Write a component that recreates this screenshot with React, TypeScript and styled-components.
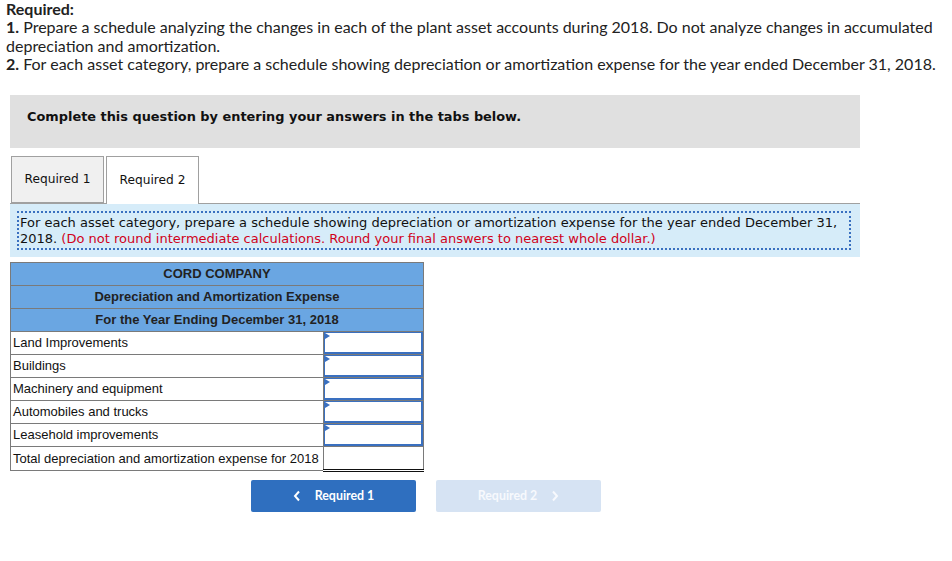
import * as React from 'react';
import styled, { createGlobalStyle } from 'styled-components';

const GlobalStyle = createGlobalStyle`
  body {
    margin: 0;
    background: #fff;
    color: #222;
  }
`;

const Page = styled.div`
  padding: 0 0 0 6px;
  box-sizing: border-box;
`;

const Requirements = styled.div`
  font-family: 'Lato', 'Liberation Sans', sans-serif;
  font-size: 16px;
  line-height: 18.4px;
  color: #222;
  p {
    margin: 0;
  }
  b {
    font-weight: 700;
  }
`;

const Panel = styled.div`
  margin: 0 0 0 4px;
  width: 850px;
`;

const Notice = styled.div`
  margin-top: 21px;
  background: #e0e0e0;
  height: 53px;
  box-sizing: border-box;
  padding: 14px 17px 0;
  font-family: 'DejaVu Sans', Verdana, sans-serif;
  font-weight: 700;
  font-size: 12.9px;
  color: #111;
`;

const TabRow = styled.div`
  display: flex;
  align-items: flex-end;
  margin-top: 8px;
  border-bottom: 1px solid #a0a0a0;
  height: 48px;
  box-sizing: border-box;
  padding-left: 1px;
`;

const Tab = styled.div<{ $active?: boolean }>`
  box-sizing: border-box;
  width: 93px;
  height: ${p => (p.$active ? '48px' : '47px')};
  margin-right: 2px;
  margin-bottom: ${p => (p.$active ? '-1px' : '0')};
  border: 1px solid #a0a0a0;
  border-bottom: ${p => (p.$active ? 'none' : '1px solid #a0a0a0')};
  background: ${p => (p.$active ? '#fff' : '#f0f0f0')};
  display: flex;
  align-items: center;
  justify-content: center;
  font-family: 'DejaVu Sans', Verdana, sans-serif;
  font-size: 12.2px;
  color: #111;
`;

const InfoBox = styled.div`
  background: #d6ecf9;
  padding: 7px 9px 7px 7px;
  height: 53px;
  box-sizing: border-box;
`;

const Dotted = styled.div`
  border: 2px dotted #3a70c0;
  padding: 2px 0 0 1px;
  font-family: 'DejaVu Sans', Verdana, sans-serif;
  font-size: 13px;
  line-height: 16px;
  color: #111;
  height: 39px;
  box-sizing: border-box;
  span {
    color: #d0021b;
  }
`;

const Schedule = styled.table`
  margin-top: 5px;
  border-collapse: collapse;
  width: 414px;
  font-family: 'Liberation Sans', Arial, sans-serif;
  font-size: 13px;
  color: #111;
`;

const HeadCell = styled.th`
  background: #6aa6e2;
  border: 1px solid #7a7a7a;
  height: 22px;
  padding: 0;
  font-weight: 700;
  text-align: center;
  color: #222;
`;

const LabelCell = styled.td`
  border: 1px solid #7a7a7a;
  height: 22px;
  padding: 0 0 0 2px;
  width: 310px;
  white-space: nowrap;
`;

const InputCell = styled.td<{ $total?: boolean }>`
  border: 1px solid #7a7a7a;
  border-bottom: ${p => (p.$total ? '3px double #111' : '1px solid #7a7a7a')};
  padding: 0;
  height: 22px;
`;

const AmountBox = styled.div`
  box-sizing: border-box;
  height: 22px;
  border: 2px solid #3a70c0;
  border-width: 1px 2px 2px 1px;
  background: #fff;
  position: relative;
  &::before {
    content: '';
    position: absolute;
    left: 0;
    top: 0;
    border-left: 5px solid #3a70c0;
    border-top: 3px solid transparent;
    border-bottom: 3px solid transparent;
  }
`;

const NavRow = styled.div`
  display: flex;
  gap: 20px;
  margin: 8px 0 0 241px;
`;

const NavButton = styled.button<{ $disabled?: boolean }>`
  width: 165px;
  height: 32px;
  border: none;
  border-radius: 2px;
  background: ${p => (p.$disabled ? '#d6e3f3' : '#2f6fbf')};
  color: ${p => (p.$disabled ? '#f7f9fd' : '#fff')};
  font-family: 'Lato', 'Liberation Sans', sans-serif;
  font-weight: 700;
  font-size: 12.4px;
  display: flex;
  align-items: center;
  justify-content: center;
  gap: 14px;
  padding: 0;
  cursor: ${p => (p.$disabled ? 'default' : 'pointer')};
`;

const Chevron = ({ dir }: { dir: 'left' | 'right' }) => (
  <svg width="8" height="12" viewBox="0 0 8 12">
    <path
      d={dir === 'left' ? 'M6 1.5 L2 6 L6 10.5' : 'M2 1.5 L6 6 L2 10.5'}
      fill="none"
      stroke="currentColor"
      strokeWidth="2"
    />
  </svg>
);

const rows = [
  'Land Improvements',
  'Buildings',
  'Machinery and equipment',
  'Automobiles and trucks',
  'Leasehold improvements',
];

export default function App() {
  return (
    <Page>
      <GlobalStyle />
      <Requirements>
        <p>
          <b>Required:</b>
        </p>
        <p>
          <b>1.</b> Prepare a schedule analyzing the changes in each of the plant asset accounts during 2018. Do not
          analyze changes in accumulated depreciation and amortization.
        </p>
        <p>
          <b>2.</b> For each asset category, prepare a schedule showing depreciation or amortization expense for the
          year ended December 31, 2018.
        </p>
      </Requirements>
      <Panel>
        <Notice>Complete this question by entering your answers in the tabs below.</Notice>
        <TabRow>
          <Tab>Required 1</Tab>
          <Tab $active>Required 2</Tab>
        </TabRow>
        <InfoBox>
          <Dotted>
            For each asset category, prepare a schedule showing depreciation or amortization expense for the year ended
            December 31, 2018. <span>(Do not round intermediate calculations. Round your final answers to nearest whole dollar.)</span>
          </Dotted>
        </InfoBox>
        <Schedule>
          <thead>
            <tr>
              <HeadCell colSpan={2}>CORD COMPANY</HeadCell>
            </tr>
            <tr>
              <HeadCell colSpan={2}>Depreciation and Amortization Expense</HeadCell>
            </tr>
            <tr>
              <HeadCell colSpan={2}>For the Year Ending December 31, 2018</HeadCell>
            </tr>
          </thead>
          <tbody>
            {rows.map(r => (
              <tr key={r}>
                <LabelCell>{r}</LabelCell>
                <InputCell>
                  <AmountBox />
                </InputCell>
              </tr>
            ))}
            <tr>
              <LabelCell>Total depreciation and amortization expense for 2018</LabelCell>
              <InputCell $total />
            </tr>
          </tbody>
        </Schedule>
        <NavRow>
          <NavButton>
            <Chevron dir="left" />
            Required 1
          </NavButton>
          <NavButton $disabled>
            Required 2
            <Chevron dir="right" />
          </NavButton>
        </NavRow>
      </Panel>
    </Page>
  );
}
